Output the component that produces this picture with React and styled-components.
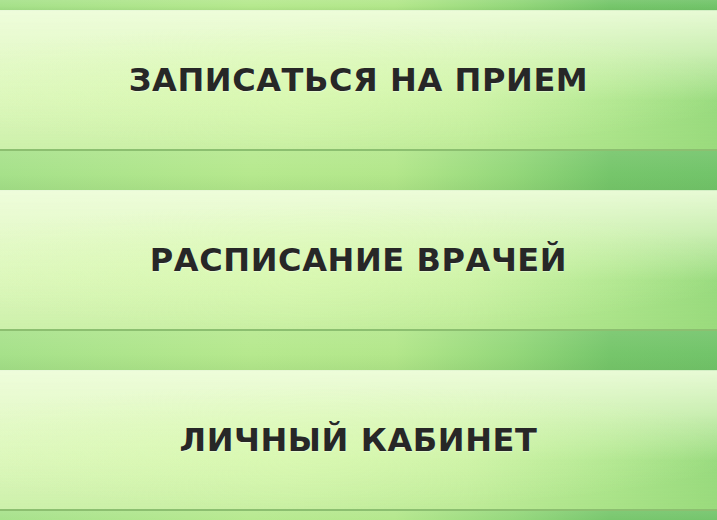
import { createGlobalStyle, styled } from "styled-components"

const GlobalStyle = createGlobalStyle`
    html, body {
        margin: 0;
        padding: 0;
        width: 717px;
        height: 520px;
        overflow: hidden;
        background: #8fd57a;
    }
`

const Wrapper = styled.div`
    width: 717px;
    height: 520px;
    display: flex;
    flex-direction: column;
    overflow: hidden;
`

const Strip = styled.div`
    flex: 0 0 ${(props) => props.height};
    background:
        linear-gradient(180deg, rgba(255, 255, 255, 0.08) 0%, rgba(255, 255, 255, 0) 60%, rgba(60, 120, 40, 0.08) 100%),
        linear-gradient(90deg, #a6e18a 0%, #b6e98e 35%, #b3e78b 55%, #93d77a 72%, #76c66b 85%, #72c46a 100%);
`

const MenuButton = styled.button`
    flex: 0 0 141px;
    width: 100%;
    display: flex;
    align-items: center;
    justify-content: center;
    padding: 0;
    margin: 0;
    border: none;
    border-top: 1px solid rgba(255, 255, 255, 0.55);
    border-bottom: 2px solid #8cbf70;
    box-sizing: border-box;
    cursor: pointer;
    outline: none;
    background:
        radial-gradient(ellipse 60% 45% at 45% 55%, rgba(220, 250, 180, 0.55) 0%, rgba(220, 250, 180, 0) 100%),
        linear-gradient(180deg, rgba(240, 253, 222, 0.9) 0%, rgba(236, 252, 214, 0.6) 30%, rgba(215, 246, 178, 0) 65%, rgba(160, 220, 120, 0.25) 100%),
        linear-gradient(90deg, #dcf7bc 0%, #d6f6b0 40%, #c8f0a2 65%, #ade58d 85%, #98da7e 100%);
`

const Label = styled.span`
    font-family: "DejaVu Sans", "Verdana", sans-serif;
    font-weight: 700;
    font-size: 32px;
    letter-spacing: 0.6px;
    color: #272727;
    text-shadow: 0 1px 1px rgba(255, 255, 255, 0.45);
    text-transform: uppercase;
`

const items = ["Записаться на прием", "Расписание врачей", "Личный кабинет"]

export default () => {
    return (
        <>
        <GlobalStyle />
        <Wrapper>
            <Strip height="10px" />
            {items.map((item, i) => (
                <>
                    <MenuButton key={item}>
                        <Label>{item}</Label>
                    </MenuButton>
                    {i < items.length - 1 && <Strip height="39px" />}
                </>
            ))}
            <Strip height="20px" />
        </Wrapper>
        </>
    )
}
